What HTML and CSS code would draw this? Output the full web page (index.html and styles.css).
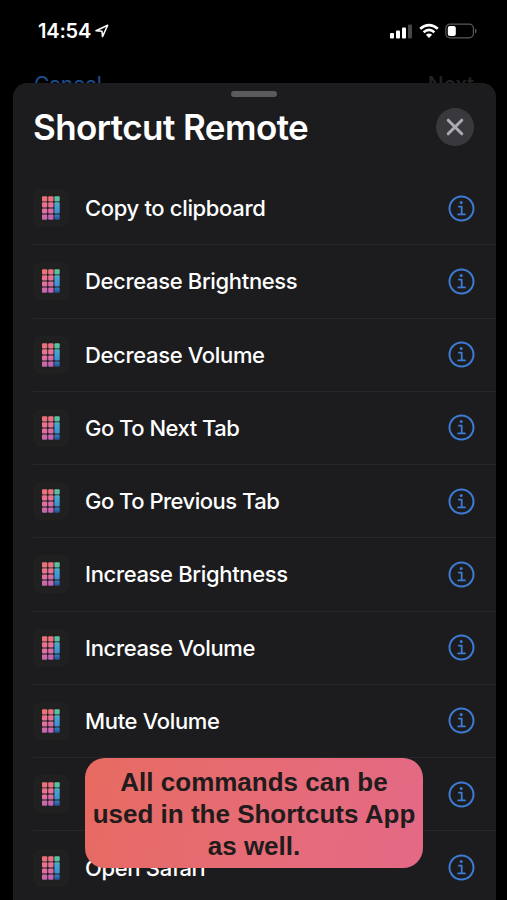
FILE: index.html
```
<!DOCTYPE html>
<html lang="en">
<head>
<meta charset="utf-8">
<title>Shortcut Remote</title>
<link rel="stylesheet" href="styles.css">
</head>
<body>
<svg class="defs" width="0" height="0" aria-hidden="true">
  <defs>
    <linearGradient id="warm" gradientUnits="userSpaceOnUse" x1="9" y1="7" x2="18" y2="31">
      <stop offset="0" stop-color="#ed716c"/><stop offset=".5" stop-color="#e8719c"/><stop offset="1" stop-color="#b961b4"/>
    </linearGradient>
    <linearGradient id="cool" gradientUnits="userSpaceOnUse" x1="0" y1="7" x2="0" y2="31">
      <stop offset="0" stop-color="#60c49b"/><stop offset=".2" stop-color="#58bda4"/><stop offset=".35" stop-color="#48a5d0"/><stop offset=".7" stop-color="#3b8fd0"/><stop offset="1" stop-color="#244f8e"/>
    </linearGradient>
    <symbol id="app" viewBox="0 0 36 38">
      <g fill="url(#warm)">
        <rect x="9" y="7.2" width="5.3" height="5.2" rx="1"/><rect x="15.2" y="7.2" width="5.3" height="5.2" rx="1"/>
        <rect x="9" y="13.3" width="5.3" height="5.2" rx="1"/><rect x="15.2" y="13.3" width="5.3" height="5.2" rx="1"/>
        <rect x="9" y="19.4" width="5.3" height="5.2" rx="1"/><rect x="15.2" y="19.4" width="5.3" height="5.2" rx="1"/>
        <rect x="9" y="25.5" width="5.3" height="5.2" rx="1"/><rect x="15.2" y="25.5" width="5.3" height="5.2" rx="1"/>
      </g>
      <g fill="url(#cool)">
        <rect x="21.4" y="7.2" width="5.3" height="5.2" rx="1"/><rect x="21.4" y="13.3" width="5.3" height="11.3" rx="1"/><rect x="21.4" y="25.5" width="5.3" height="5.2" rx="1"/>
      </g>
    </symbol>
    <symbol id="info" viewBox="0 0 27 27">
      <circle cx="13.5" cy="13.5" r="12" fill="none" stroke="#3d7bd4" stroke-width="2"/>
      <circle cx="13.2" cy="7.6" r="1.5" fill="#3d7bd4"/>
      <path d="M10.8 11.6h2.9v7.6M10.2 19.4h6.8" fill="none" stroke="#3d7bd4" stroke-width="1.8" stroke-linecap="round" stroke-linejoin="round"/>
    </symbol>
  </defs>
</svg>
<div class="screen">
  <header class="status">
    <div class="clock"><span class="time">14:54</span>
      <svg width="14" height="14" viewBox="0 0 14 14"><path d="M1 6.7 12.7 1.2 7.5 12.6 7 7.2Z" fill="none" stroke="#fff" stroke-width="1.5" stroke-linejoin="round"/></svg>
    </div>
    <div class="signals">
      <svg width="22" height="16" viewBox="0 0 22 16"><g fill="#fff"><rect y="10" width="4" height="5.5" rx="1"/><rect x="6" y="7.5" width="4" height="8" rx="1"/><rect x="12" y="4.5" width="4" height="11" rx="1"/><rect x="18" y="1.5" width="4" height="14" rx="1" opacity=".28"/></g></svg>
      <svg width="20" height="16" viewBox="0 0 20 16"><path d="M1.2 5.8Q10-1.7 18.8 5.8M4.6 9.2Q10 4.7 15.4 9.2" fill="none" stroke="#fff" stroke-width="2.7"/><path d="M6.9 11.8Q10 9.3 13.1 11.8L10 15Z" fill="#fff"/></svg>
      <svg width="32" height="16" viewBox="0 0 32 16"><rect x=".8" y="1.1" width="27.6" height="13.8" rx="4.2" fill="none" stroke="#59595b" stroke-width="1.2"/><rect x="2.8" y="3" width="8" height="10" rx="2" fill="#fff"/><path d="M30 5.5Q31.6 6.3 31.6 8T30 10.5Z" fill="#59595b"/></svg>
    </div>
  </header>
  <nav class="underlay"><span>Cancel</span><span class="next">Next</span></nav>
  <main class="sheet">
    <div class="grabber"></div>
    <div class="heading">
      <h1>Shortcut Remote</h1>
      <button class="close" aria-label="Close"><svg width="38" height="38" viewBox="0 0 38 38"><path d="m12.2 12.2 13.6 13.6m0-13.6L12.2 25.8" stroke="#aaaaaf" stroke-width="3" stroke-linecap="round"/></svg></button>
    </div>
    <ul class="actions">
      <li><svg class="app"><use href="#app"/></svg><span class="label">Copy to clipboard</span><svg class="info"><use href="#info"/></svg></li>
      <li><svg class="app"><use href="#app"/></svg><span class="label">Decrease Brightness</span><svg class="info"><use href="#info"/></svg></li>
      <li><svg class="app"><use href="#app"/></svg><span class="label">Decrease Volume</span><svg class="info"><use href="#info"/></svg></li>
      <li><svg class="app"><use href="#app"/></svg><span class="label tabs">Go To Next Tab</span><svg class="info"><use href="#info"/></svg></li>
      <li><svg class="app"><use href="#app"/></svg><span class="label tabs">Go To Previous Tab</span><svg class="info"><use href="#info"/></svg></li>
      <li><svg class="app"><use href="#app"/></svg><span class="label">Increase Brightness</span><svg class="info"><use href="#info"/></svg></li>
      <li><svg class="app"><use href="#app"/></svg><span class="label">Increase Volume</span><svg class="info"><use href="#info"/></svg></li>
      <li><svg class="app"><use href="#app"/></svg><span class="label">Mute Volume</span><svg class="info"><use href="#info"/></svg></li>
      <li><svg class="app"><use href="#app"/></svg><span class="label"></span><svg class="info"><use href="#info"/></svg></li>
      <li><svg class="app"><use href="#app"/></svg><span class="label">Open Safari</span><svg class="info"><use href="#info"/></svg></li>
    </ul>
  </main>
  <p class="callout">All commands can be<br>used in the Shortcuts App<br>as well.</p>
</div>
</body>
</html>
```
FILE: styles.css
```
* { box-sizing: border-box; }
body { margin: 0; background: #000; font-family: Inter, "Liberation Sans", sans-serif; }
.defs { position: absolute; }
.screen { position: relative; width: 507px; height: 900px; overflow: hidden; display: flex; flex-direction: column; background: #000; }
.status { height: 60px; flex: none; padding: 1px 30px 0 38px; display: flex; align-items: center; justify-content: space-between; }
.clock { display: flex; align-items: center; gap: 4px; color: #fff; }
.time { font-size: 20px; font-weight: 600; line-height: 24px; letter-spacing: -.2px; }
.signals { display: flex; gap: 7px; align-items: center; }
.signals svg:nth-child(2) { margin-right: -1px; }
.underlay { height: 23px; flex: none; padding: 12px 33px 0 34px; display: flex; justify-content: space-between; font-size: 21px; line-height: 26px; letter-spacing: -.2px; color: #1c4f91; }
.next { color: #232325; font-weight: 500; }
.sheet { position: relative; flex: 1; min-height: 0; margin: 0 11.5px 0 12.5px; overflow: hidden; border-radius: 14px 14px 0 0; background: #1c1c1e; color: #fff; }
.grabber { width: 46px; height: 6px; margin: 8px auto 0; border-radius: 3px; background: #5b5b5e; }
.heading { height: 75px; padding: 11px 21.5px 0 20.5px; display: flex; justify-content: space-between; align-items: flex-start; }
h1 { margin: 0; font-size: 35px; line-height: 38px; font-weight: 600; letter-spacing: -.56px; white-space: nowrap; }
.close { width: 38px; height: 38px; padding: 0; border: 0; border-radius: 50%; background: #39393d; }
.close svg { display: block; }
.actions { list-style: none; margin: 0 0 0 20.5px; padding: 0; }
.actions li { height: 73.27px; display: flex; align-items: center; padding-right: 20.5px; border-bottom: 1px solid #272729; }
.app { width: 36px; height: 38px; flex: none; border-radius: 8px; background: #202021; }
.label { flex: 1; margin-left: 16px; font-size: 22px; line-height: 28px; font-weight: 540; letter-spacing: -.34px; white-space: nowrap; }
.tabs { letter-spacing: -.5px; }
.info { width: 27px; height: 27px; flex: none; }
.callout { position: absolute; left: 85px; top: 758px; width: 338px; height: 110px; margin: 0; padding-top: 8px; border-radius: 20px; background: linear-gradient(105deg, #e76b61, #e66b7b 65%, #e36986); color: #211b1c; font: bold 26px/32px "Liberation Sans", sans-serif; text-align: center; white-space: nowrap; }
```
